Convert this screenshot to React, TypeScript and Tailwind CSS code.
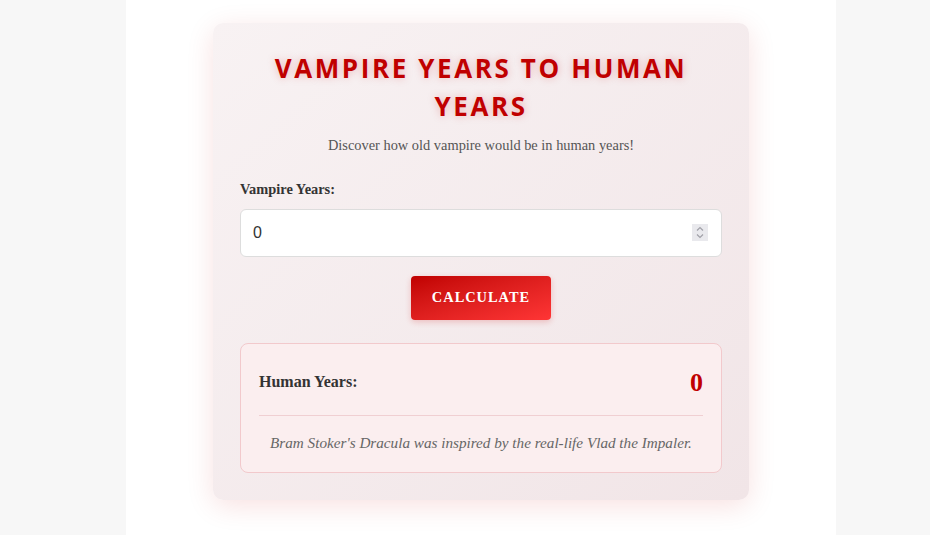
import React, { useState } from 'react';

const facts = [
  "Bram Stoker's Dracula was inspired by the real-life Vlad the Impaler.",
];

export default function App() {
  const [years, setYears] = useState('0');
  const [human, setHuman] = useState(0);

  const calculate = () => {
    const v = parseFloat(years) || 0;
    setHuman(Math.round(v / 10));
  };

  return (
    <div className="min-h-[535px] bg-[#f7f7f7] flex" style={{ fontFamily: '"Liberation Serif", serif' }}>
      <div className="ml-[126px] w-[710px] bg-white pt-[23px] pb-10 flex justify-center">
        <div className="w-[536px] h-fit rounded-[10px] bg-gradient-to-br from-[#f8f2f3] to-[#f1e5e7] px-[27px] pt-[26px] pb-[27px] shadow-[0_6px_28px_rgba(200,0,0,0.12)]">
          <h1 className="text-center text-[26px] leading-[38px] font-bold tracking-[2.6px] text-[#c00000] [text-shadow:0_0_8px_rgba(200,0,0,0.25)] px-4" style={{ fontFamily: '"Open Sans", sans-serif' }}>
            VAMPIRE YEARS TO HUMAN YEARS
          </h1>
          <p className="mt-[10px] text-center text-[14.4px] text-[#555]">
            Discover how old vampire would be in human years!
          </p>

          <label className="block mt-[22px] text-[14.4px] font-bold text-[#333]">Vampire Years:</label>
          <div className="relative mt-[9px]">
            <input
              type="number"
              value={years}
              onChange={(e) => setYears(e.target.value)}
              className="block w-full h-12 rounded-[6px] border border-[#ddd] bg-white px-[12px] text-[16px] text-[#333] outline-none [appearance:textfield]"
              style={{ fontFamily: '"Liberation Sans", Arial, sans-serif' }}
            />
            <div className="absolute right-[14px] top-[15px] w-[16px] h-[17px] bg-[#e9e9ed] flex items-center justify-center pointer-events-none">
              <svg width="8" height="13" viewBox="0 0 8 13" fill="none" stroke="#a0a0a8" strokeWidth="1.2">
                <path d="M1 4.5 L4 1.5 L7 4.5" />
                <path d="M1 8.5 L4 11.5 L7 8.5" />
              </svg>
            </div>
          </div>

          <div className="flex justify-center mt-[19px]">
            <button
              onClick={calculate}
              className="w-[140px] h-11 rounded-[4px] bg-gradient-to-br from-[#c00000] to-[#ff3535] text-white font-bold text-[14.4px] tracking-[1px] shadow-[0_2px_6px_rgba(200,0,0,0.2)]"
            >
              CALCULATE
            </button>
          </div>

          <div className="mt-[23px] rounded-[8px] border border-[#f2c9cc] bg-[#fbeeef] px-[18px] pt-[22px] pb-[17px]">
            <div className="flex items-center justify-between h-[32px]">
              <span className="text-[16px] font-bold text-[#333]">Human Years:</span>
              <span className="text-[26px] font-bold text-[#c00000]">{human}</span>
            </div>
            <div className="mt-[17px] border-t border-[#f0cfd2]" />
            <p className="mt-[16px] text-center italic text-[15.2px] text-[#666]">{facts[0]}</p>
          </div>
        </div>
      </div>
    </div>
  );
}
